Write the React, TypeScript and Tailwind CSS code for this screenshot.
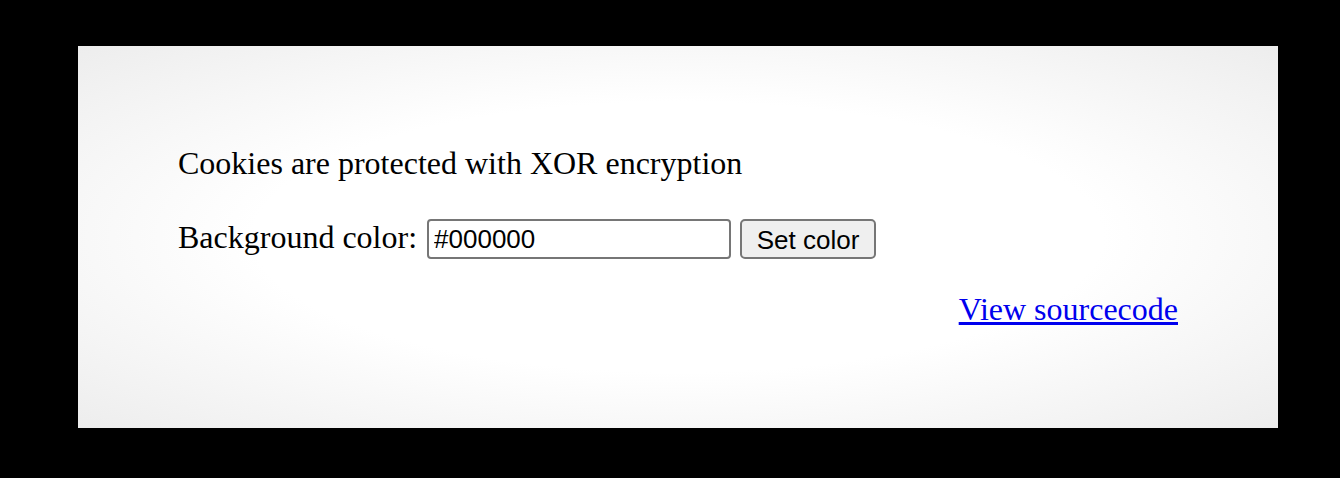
export default function App() {
  return (
    <div className="w-[1340px] h-[478px] bg-black pt-[46px] pl-[78px]">
      <div
        className="w-[1200px] h-[382px] flex flex-col pt-[99px] px-[100px] text-black bg-[radial-gradient(ellipse_at_center,#ffffff_50%,#ededed_100%)]"
        style={{ fontFamily: '"Liberation Serif", "Times New Roman", serif' }}
      >
        <p className="text-[32px] leading-[36px]">Cookies are protected with XOR encryption</p>

        <form className="mt-[38px] flex items-start" onSubmit={(e) => e.preventDefault()}>
          <label className="text-[32px] leading-[36px]">Background color:</label>
          <input
            type="text"
            defaultValue="#000000"
            className="ml-[10px] w-[304px] h-[40px] border-2 border-[#767676] rounded-[4px] bg-white px-[5px] text-[26px] text-black outline-none"
            style={{ fontFamily: '"Liberation Sans", Arial, sans-serif' }}
          />
          <button
            type="submit"
            className="ml-[9px] w-[136px] h-[40px] border-2 border-[#767676] rounded-[5px] bg-[#efefef] text-[26px] text-black"
            style={{ fontFamily: '"Liberation Sans", Arial, sans-serif' }}
          >
            Set color
          </button>
        </form>

        <div className="mt-[32px] flex justify-end">
          <a href="#" className="text-[32px] leading-[36px] text-[#0000ee] underline">
            View sourcecode
          </a>
        </div>
      </div>
    </div>
  );
}
